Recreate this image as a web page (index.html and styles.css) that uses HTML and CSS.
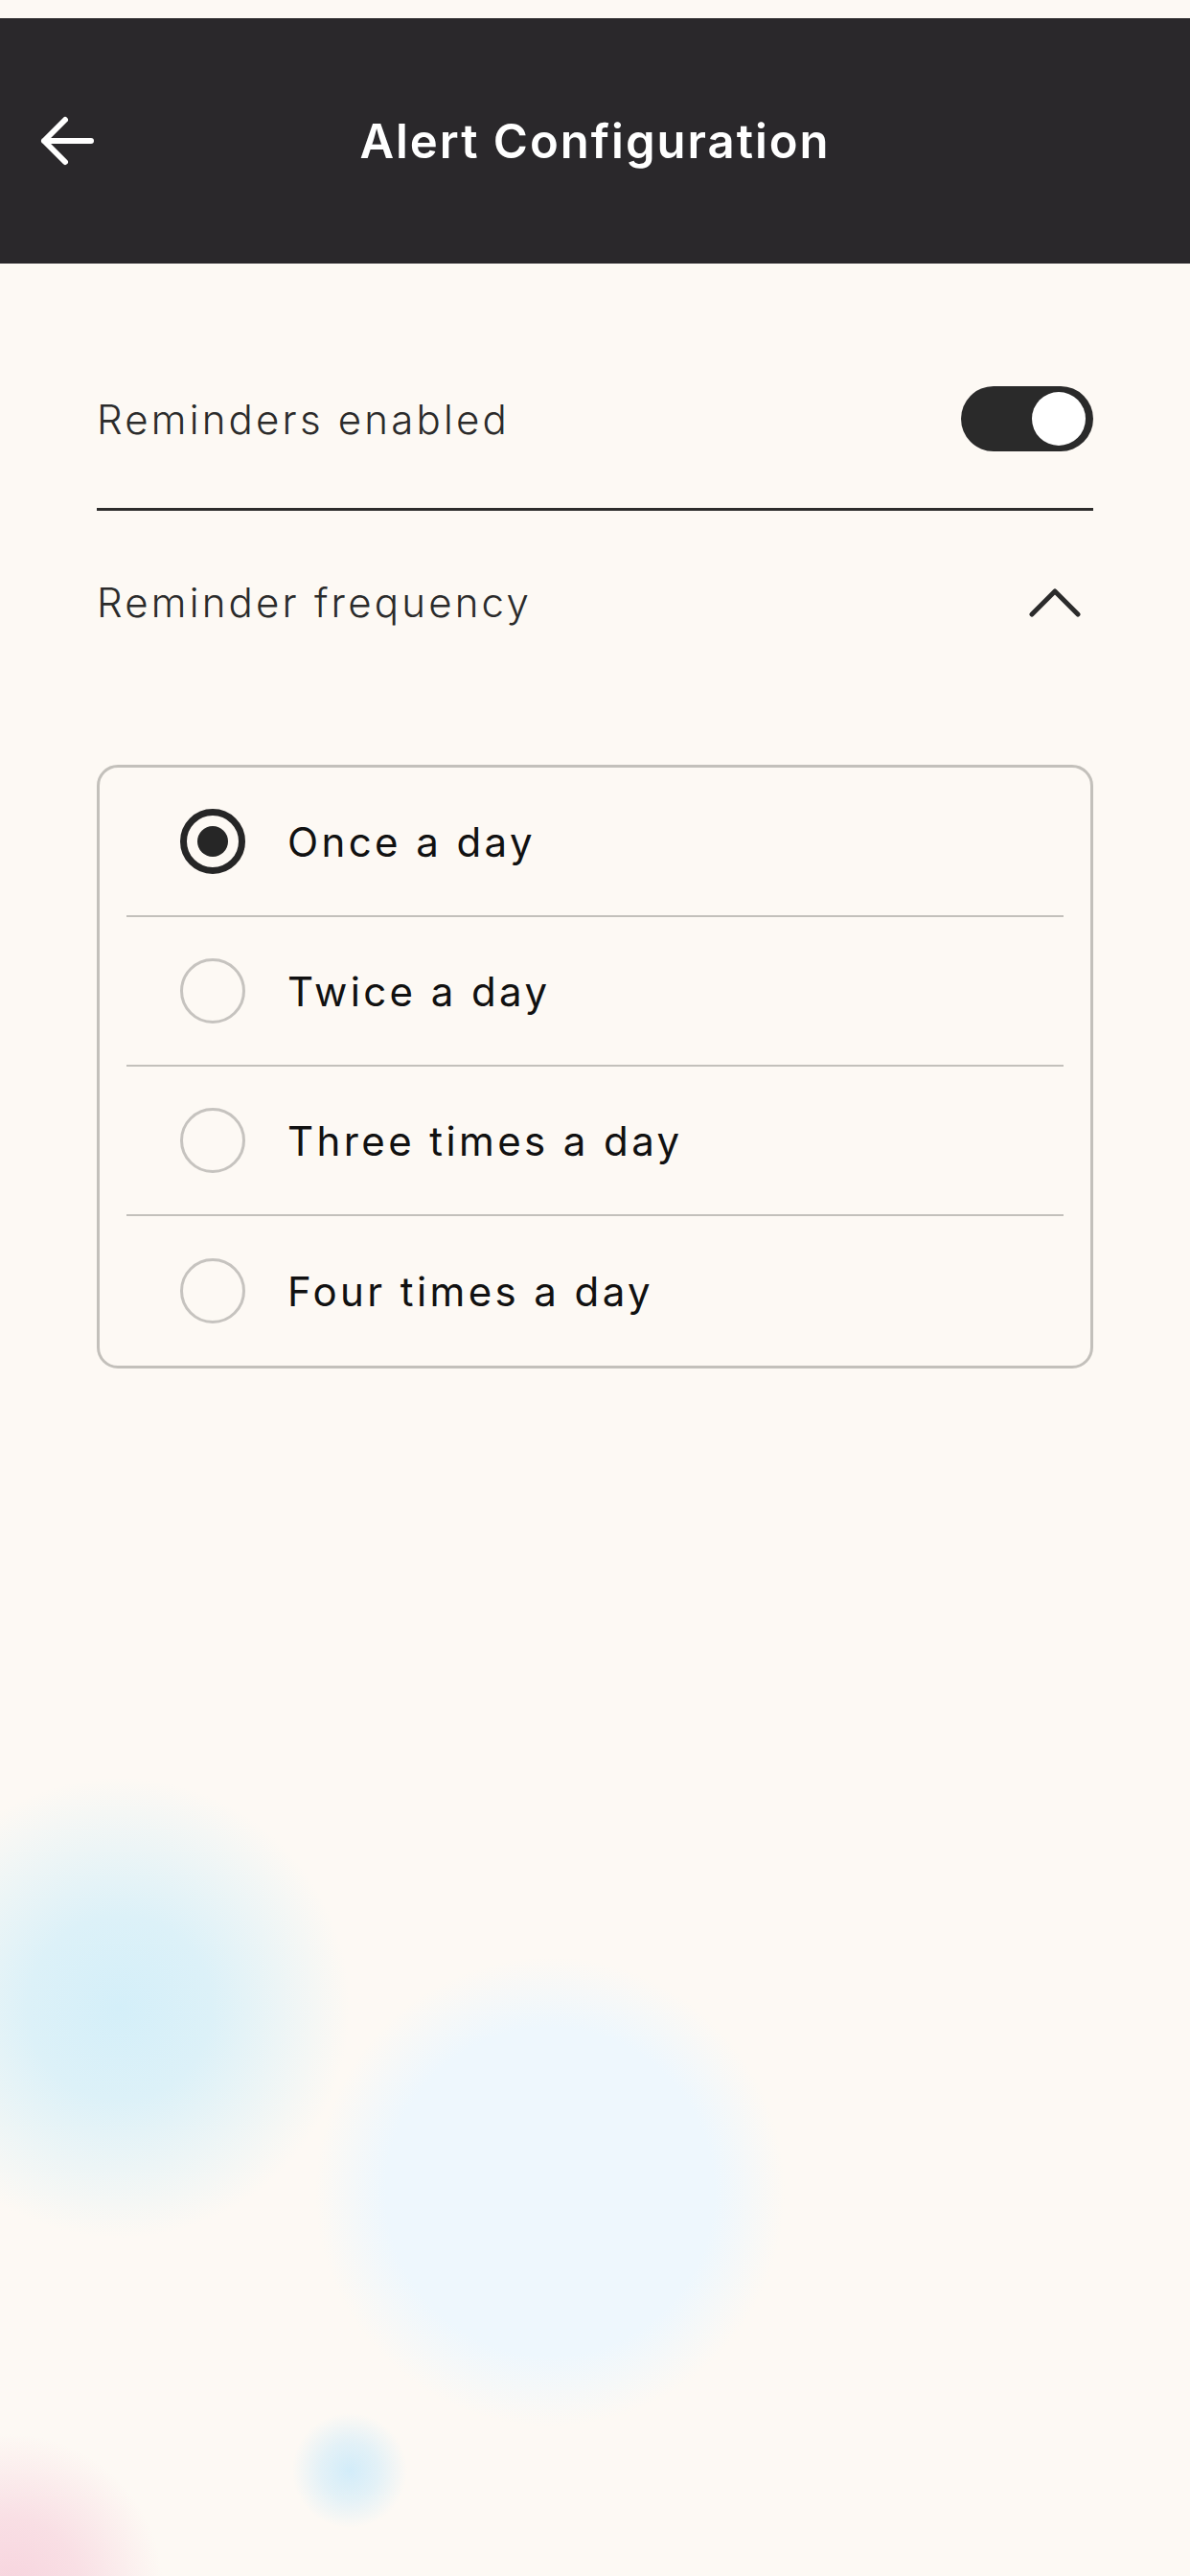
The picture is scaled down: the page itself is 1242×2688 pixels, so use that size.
FILE: index.html
```html
<!DOCTYPE html>
<html lang="en">
  <head>
    <meta charset="UTF-8" />
    <meta name="viewport" content="width=device-width, initial-scale=1.0" />
    <title>Alert Configuration</title>
    <link rel="stylesheet" href="styles.css">
  </head>
  <body>
    <div class="screen">
      <div class="statusbar"></div>
      <header class="topbar">
        <button class="back" aria-label="Back">
          <svg width="58" height="54" viewBox="0 0 58 54">
            <path d="M54 27 H5 M27 5 L5 27 L27 49" fill="none" stroke="#fff" stroke-width="6" stroke-linecap="round" stroke-linejoin="round"/>
          </svg>
        </button>
        <h1>Alert Configuration</h1>
      </header>

      <main class="content">
        <div class="setting">
          <span class="label">Reminders enabled</span>
          <div class="toggle on"><span class="knob"></span></div>
        </div>
        <hr class="rule">
        <div class="setting freq">
          <span class="label">Reminder frequency</span>
          <svg class="chevron" width="54" height="30" viewBox="0 0 54 30">
            <path d="M3 27 L27 3 L51 27" fill="none" stroke="#2b2b2b" stroke-width="5" stroke-linecap="round" stroke-linejoin="round"/>
          </svg>
        </div>

        <div class="options">
          <label class="option">
            <span class="radio checked"></span>
            <span class="text">Once a day</span>
          </label>
          <label class="option">
            <span class="radio"></span>
            <span class="text">Twice a day</span>
          </label>
          <label class="option">
            <span class="radio"></span>
            <span class="text">Three times a day</span>
          </label>
          <label class="option">
            <span class="radio"></span>
            <span class="text">Four times a day</span>
          </label>
        </div>
      </main>
    </div>
  </body>
</html>
```

FILE: styles.css
```css
*{
    margin: 0;
    padding: 0;
    box-sizing: border-box;
}

body{
    font-family: 'Inter', 'Noto Sans', sans-serif;
    background: #fdf9f4;
}

.screen{
    min-height: 2688px;
    background:
        radial-gradient(circle 60px at 365px 2578px, rgba(210,236,249,1) 0%, rgba(210,236,249,0.6) 50%, rgba(210,236,249,0) 100%),
        radial-gradient(circle 160px at 10px 2700px, rgba(247,212,222,1) 0%, rgba(247,212,222,0.7) 45%, rgba(247,212,222,0) 100%),
        radial-gradient(circle 245px at 574px 2287px, rgba(238,247,253,1) 0%, rgba(238,247,253,1) 70%, rgba(238,247,253,0) 100%),
        radial-gradient(circle 240px at 125px 2095px, rgba(212,239,249,1) 0%, rgba(212,239,249,0.8) 40%, rgba(212,239,249,0) 100%),
        #fdf9f4;
}

.statusbar{
    height: 19px;
}

.topbar{
    height: 256px;
    background: #2a282b;
    display: flex;
    align-items: center;
    justify-content: center;
    position: relative;
}

.back{
    position: absolute;
    left: 41px;
    top: 101px;
    background: none;
    border: none;
    display: flex;
}

.topbar h1{
    color: #fff;
    font-size: 49px;
    font-weight: 600;
    letter-spacing: 2px;
}

.content{
    padding: 128px 101px 0;
}

.setting{
    display: flex;
    align-items: center;
    justify-content: space-between;
}

.label{
    font-size: 42px;
    font-weight: 300;
    letter-spacing: 3.2px;
    color: #2b2b2b;
}

.toggle{
    width: 138px;
    height: 68px;
    border-radius: 34px;
    background: #2a2a2a;
    display: flex;
    align-items: center;
    justify-content: flex-end;
    padding: 0 8px;
}

.knob{
    width: 56px;
    height: 56px;
    border-radius: 50%;
    background: #fff;
}

.rule{
    border: none;
    height: 3px;
    background: #2e2d2c;
    margin: 59px 0 0;
}

.freq{
    margin-top: 70px;
}

.chevron{
    margin-right: 13px;
}

.options{
    margin-top: 144px;
    border: 3px solid #c3c0bb;
    border-radius: 22px;
    padding: 0 28px;
}

.option{
    height: 156px;
    display: flex;
    align-items: center;
    padding-left: 56px;
    gap: 44px;
    border-bottom: 2px solid #c3c0bb;
}

.option:last-child{
    border-bottom: none;
}

.radio{
    width: 68px;
    height: 68px;
    border-radius: 50%;
    border: 3px solid #c6c3bf;
    display: flex;
    align-items: center;
    justify-content: center;
}

.radio.checked{
    border: 7px solid #262626;
}

.radio.checked::after{
    content: "";
    width: 32px;
    height: 32px;
    border-radius: 50%;
    background: #262626;
}

.text{
    font-size: 42px;
    letter-spacing: 3.4px;
    color: #111;
}
```
